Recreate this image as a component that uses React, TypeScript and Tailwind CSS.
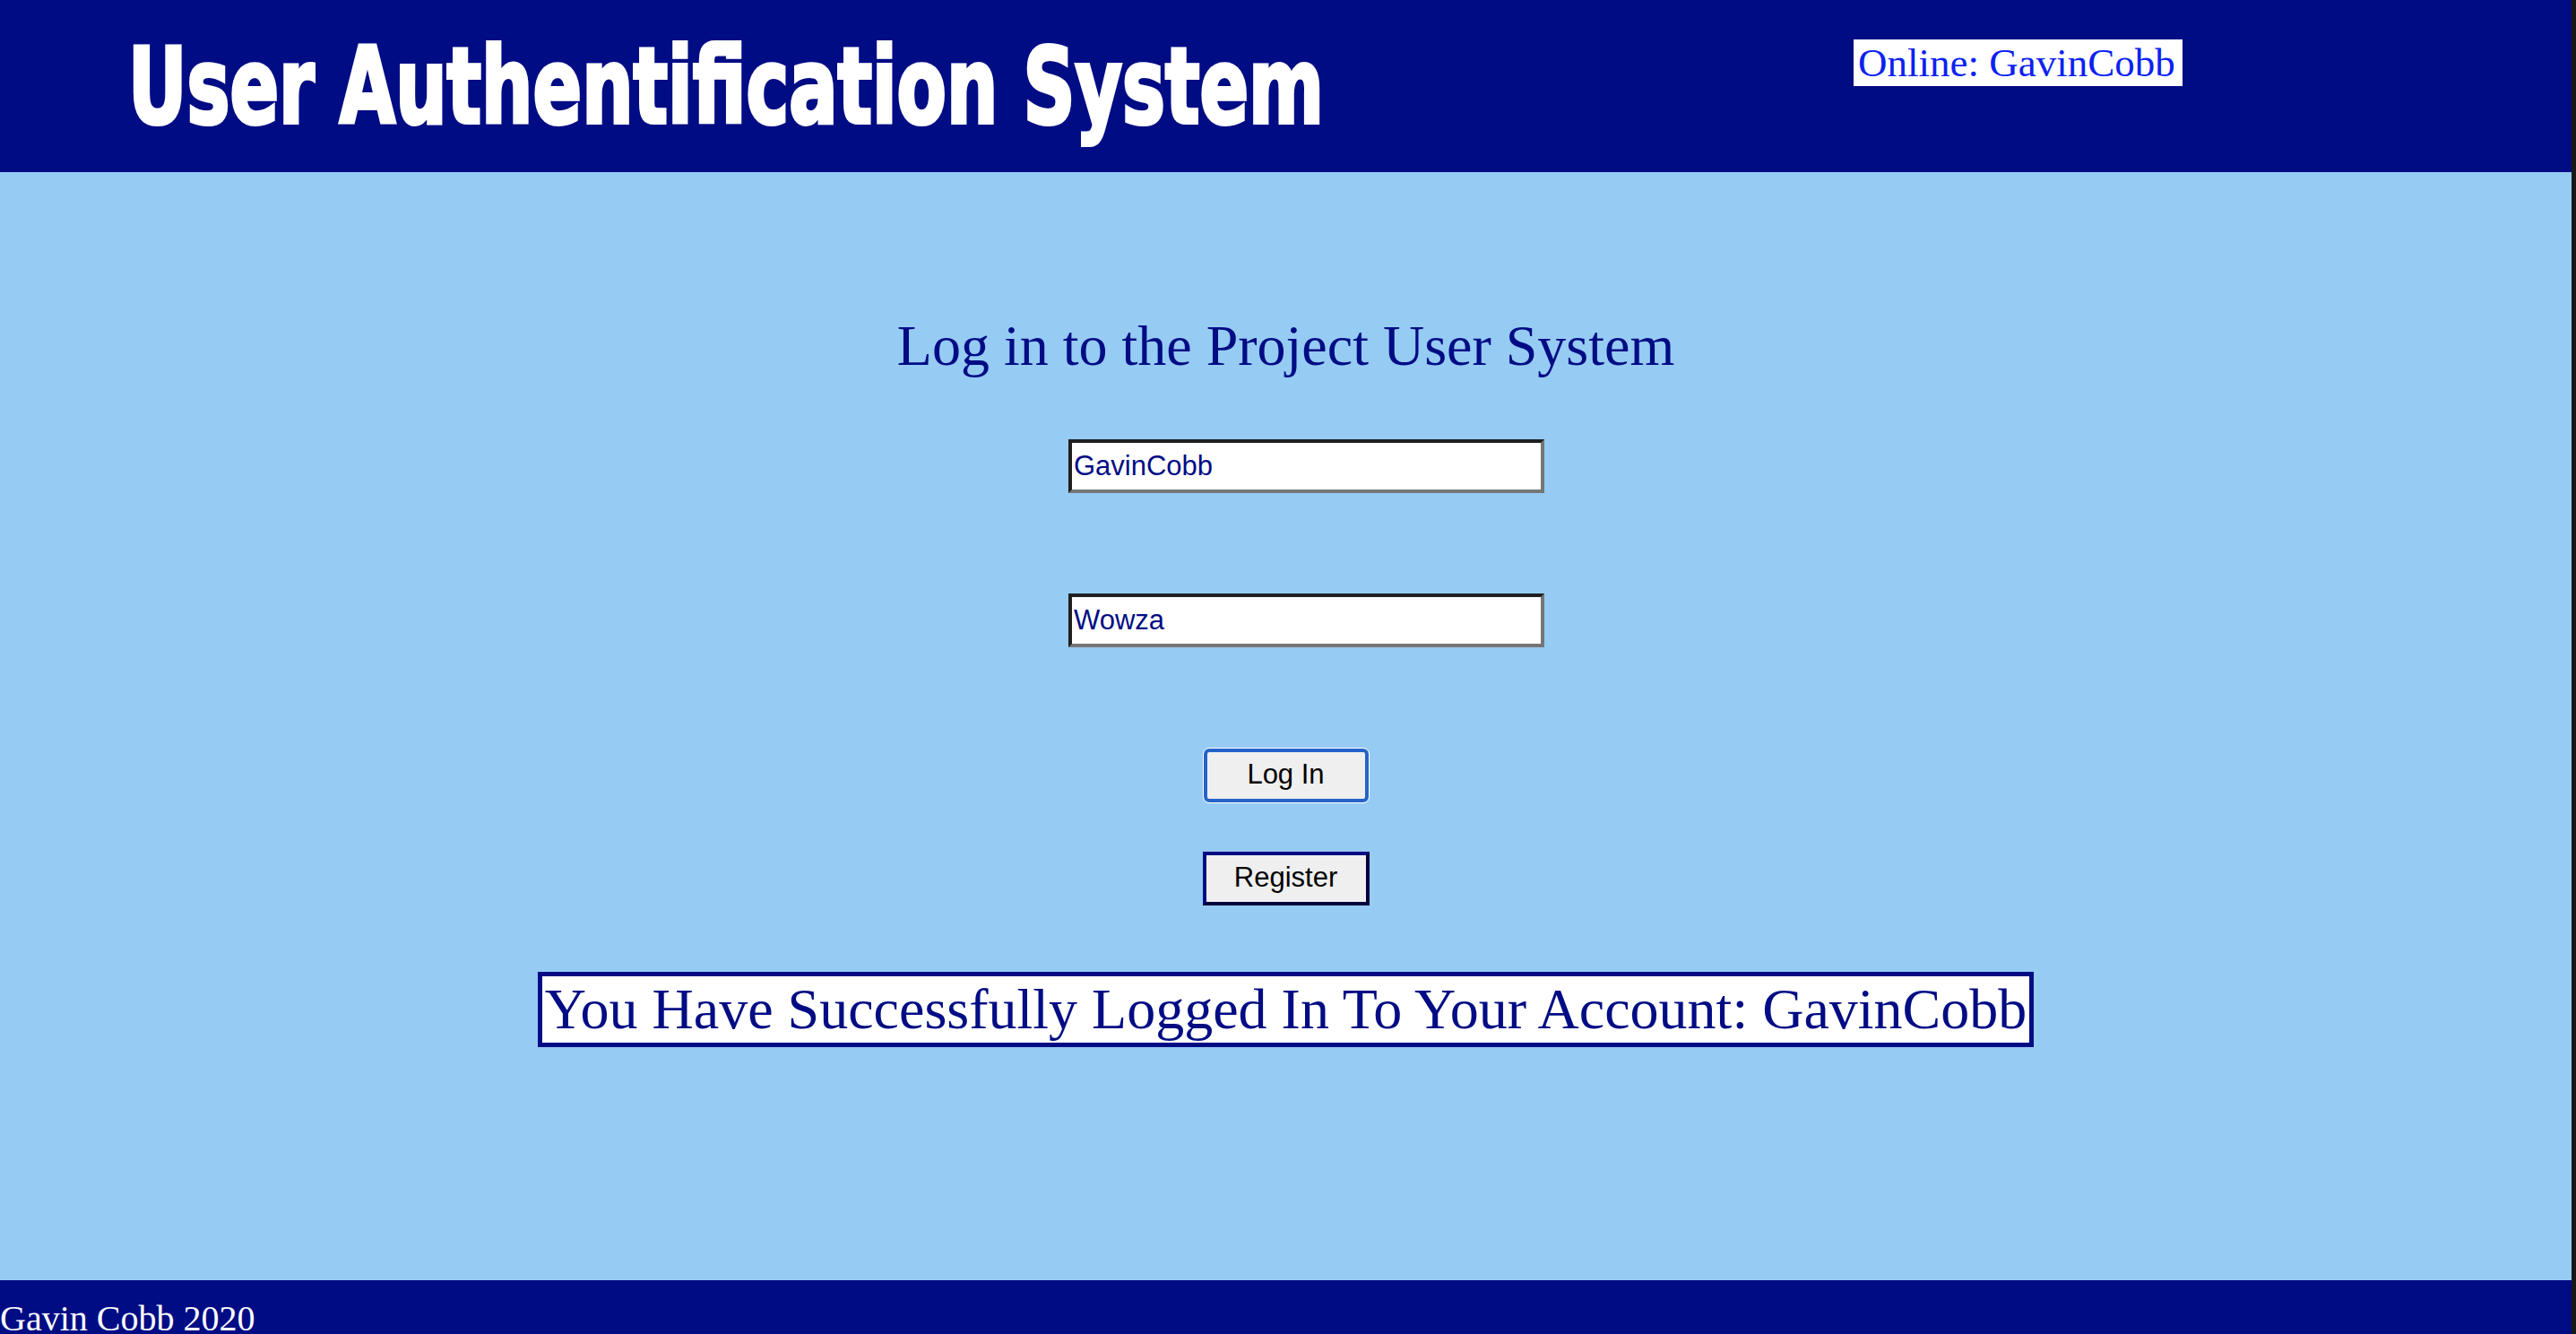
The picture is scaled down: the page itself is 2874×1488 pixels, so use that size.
export default function App() {
  return (
    <div className="min-h-screen w-full border-r-[5px] border-r-[#171717] bg-[#96cbf4]">
      {/* header */}
      <header className="grid h-[192px] grid-cols-[2068px_1fr] bg-[#000c84]">
        <div className="pl-[143px] pt-[37px]">
          <h1
            className="inline-block origin-left scale-x-[0.759] text-[118px] font-bold leading-none text-white whitespace-nowrap [-webkit-text-stroke:4px_white]"
            style={{ fontFamily: 'Impact, "Liberation Sans Narrow", "Arial Narrow", "DejaVu Sans Condensed", "Liberation Sans", sans-serif' }}
          >
            User Authentification System
          </h1>
        </div>
        <div className="pt-[44px]">
          <span className="inline-block bg-white pl-[5px] pr-[8px] font-['Liberation_Serif',serif] text-[45px] leading-[52px] text-[#0b22f2]">
            Online: GavinCobb
          </span>
        </div>
      </header>

      {/* login form */}
      <main className="flex h-[1236px] flex-col items-center pt-[157px] font-['Liberation_Serif',serif]">
        <h2 className="text-[64px] leading-[73.6px] text-[#000c84]">Log in to the Project User System</h2>

        <input
          type="text"
          defaultValue="GavinCobb"
          className="ml-[46px] mt-[67px] h-[60px] w-[531px] border-4 border-t-[#1f1f1f] border-l-[#1f1f1f] border-b-[#767676] border-r-[#767676] bg-white px-[2px] font-['Liberation_Sans',sans-serif] text-[31px] text-[#000c84] outline-none"
        />
        <input
          type="text"
          defaultValue="Wowza"
          className="ml-[46px] mt-[112px] h-[60px] w-[531px] border-4 border-t-[#1f1f1f] border-l-[#1f1f1f] border-b-[#767676] border-r-[#767676] bg-white px-[2px] font-['Liberation_Sans',sans-serif] text-[31px] text-[#000c84] outline-none"
        />

        <button className="mt-[113px] h-[60px] w-[184px] rounded-[6px] border-4 border-[#2563c9] bg-[#efefef] font-['Liberation_Sans',sans-serif] text-[31px] text-black outline outline-white">
          Log In
        </button>
        <button className="mt-[55px] h-[60px] w-[186px] border-4 border-t-[#000c84] border-l-[#000c84] border-b-[#00003c] border-r-[#00003c] bg-[#efefef] font-['Liberation_Sans',sans-serif] text-[31px] text-black">
          Register
        </button>

        <p className="mt-[74px] border-[5px] border-[#000c84] bg-white px-[3px] text-[64px] leading-[74px] text-[#000c84] whitespace-nowrap">
          You Have Successfully Logged In To Your Account: GavinCobb
        </p>
      </main>

      {/* footer */}
      <footer className="bg-[#000c84] pt-[20px] pb-[20px] font-['Liberation_Serif',serif] text-[40px] leading-[46px] text-white">
        Gavin Cobb 2020
      </footer>
    </div>
  );
}
